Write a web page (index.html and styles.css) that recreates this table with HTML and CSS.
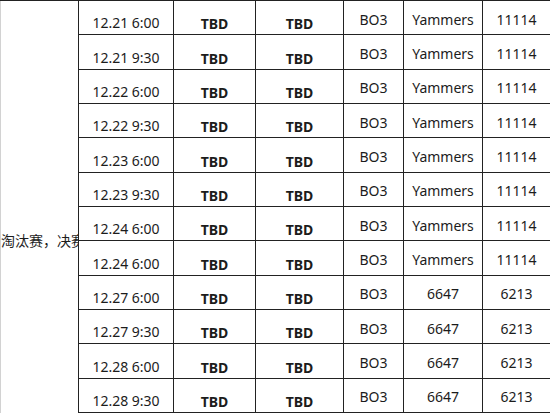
FILE: index.html
```html
<!DOCTYPE html>
<html lang="zh">
<head>
<meta charset="utf-8">
<link rel="stylesheet" href="styles.css">
</head>
<body>
<div class="sched">
  <div class="stage"><span>淘汰赛，决赛</span></div>

  <div class="c date">12.21 6:00</div><div class="c tbd">TBD</div><div class="c tbd">TBD</div><div class="c mid">BO3</div><div class="c mid">Yammers</div><div class="c mid">11114</div>
  <div class="c date">12.21 9:30</div><div class="c tbd">TBD</div><div class="c tbd">TBD</div><div class="c mid">BO3</div><div class="c mid">Yammers</div><div class="c mid">11114</div>
  <div class="c date">12.22 6:00</div><div class="c tbd">TBD</div><div class="c tbd">TBD</div><div class="c mid">BO3</div><div class="c mid">Yammers</div><div class="c mid">11114</div>
  <div class="c date">12.22 9:30</div><div class="c tbd">TBD</div><div class="c tbd">TBD</div><div class="c mid">BO3</div><div class="c mid">Yammers</div><div class="c mid">11114</div>
  <div class="c date">12.23 6:00</div><div class="c tbd">TBD</div><div class="c tbd">TBD</div><div class="c mid">BO3</div><div class="c mid">Yammers</div><div class="c mid">11114</div>
  <div class="c date">12.23 9:30</div><div class="c tbd">TBD</div><div class="c tbd">TBD</div><div class="c mid">BO3</div><div class="c mid">Yammers</div><div class="c mid">11114</div>
  <div class="c date">12.24 6:00</div><div class="c tbd">TBD</div><div class="c tbd">TBD</div><div class="c mid">BO3</div><div class="c mid">Yammers</div><div class="c mid">11114</div>
  <div class="c date">12.24 6:00</div><div class="c tbd">TBD</div><div class="c tbd">TBD</div><div class="c mid">BO3</div><div class="c mid">Yammers</div><div class="c mid">11114</div>
  <div class="c date">12.27 6:00</div><div class="c tbd">TBD</div><div class="c tbd">TBD</div><div class="c mid">BO3</div><div class="c mid">6647</div><div class="c mid">6213</div>
  <div class="c date">12.27 9:30</div><div class="c tbd">TBD</div><div class="c tbd">TBD</div><div class="c mid">BO3</div><div class="c mid">6647</div><div class="c mid">6213</div>
  <div class="c date">12.28 6:00</div><div class="c tbd">TBD</div><div class="c tbd">TBD</div><div class="c mid">BO3</div><div class="c mid">6647</div><div class="c mid">6213</div>
  <div class="c date">12.28 9:30</div><div class="c tbd">TBD</div><div class="c tbd">TBD</div><div class="c mid">BO3</div><div class="c mid">6647</div><div class="c mid">6213</div>
</div>
</body>
</html>
```

FILE: styles.css
```css
html, body {
  margin: 0;
  padding: 0;
  background: #ffffff;
}

body {
  width: 550px;
  height: 413px;
  overflow: hidden;
  font-family: "Noto Sans", "Noto Sans CJK SC", sans-serif;
  font-size: 14px;
  color: #1c1c1c;
}

.sched {
  display: grid;
  grid-template-columns: 78px 95px 82px 88px 60px 79px 68px;
  grid-template-rows: repeat(12, 1fr);
  height: 413px;
  box-sizing: border-box;
  border-top: 1px solid #222;
}

.stage {
  grid-row: 1 / span 12;
  grid-column: 1;
  border-left: 1px solid #d2d2d2;
  display: flex;
  align-items: center;
  padding-top: 66px;
  overflow: hidden;
  white-space: nowrap;
  font-family: "Noto Sans CJK SC", sans-serif;
  font-size: 14px;
}

.c {
  box-sizing: border-box;
  border-left: 1px solid #222;
  border-bottom: 1px solid #222;
  display: flex;
  justify-content: center;
  white-space: nowrap;
  line-height: 16px;
}

.date {
  align-items: flex-end;
  padding-bottom: 3px;
}

.tbd {
  align-items: flex-end;
  padding-bottom: 2px;
  font-weight: 700;
}

.mid {
  align-items: center;
  padding-top: 4px;
}
```
